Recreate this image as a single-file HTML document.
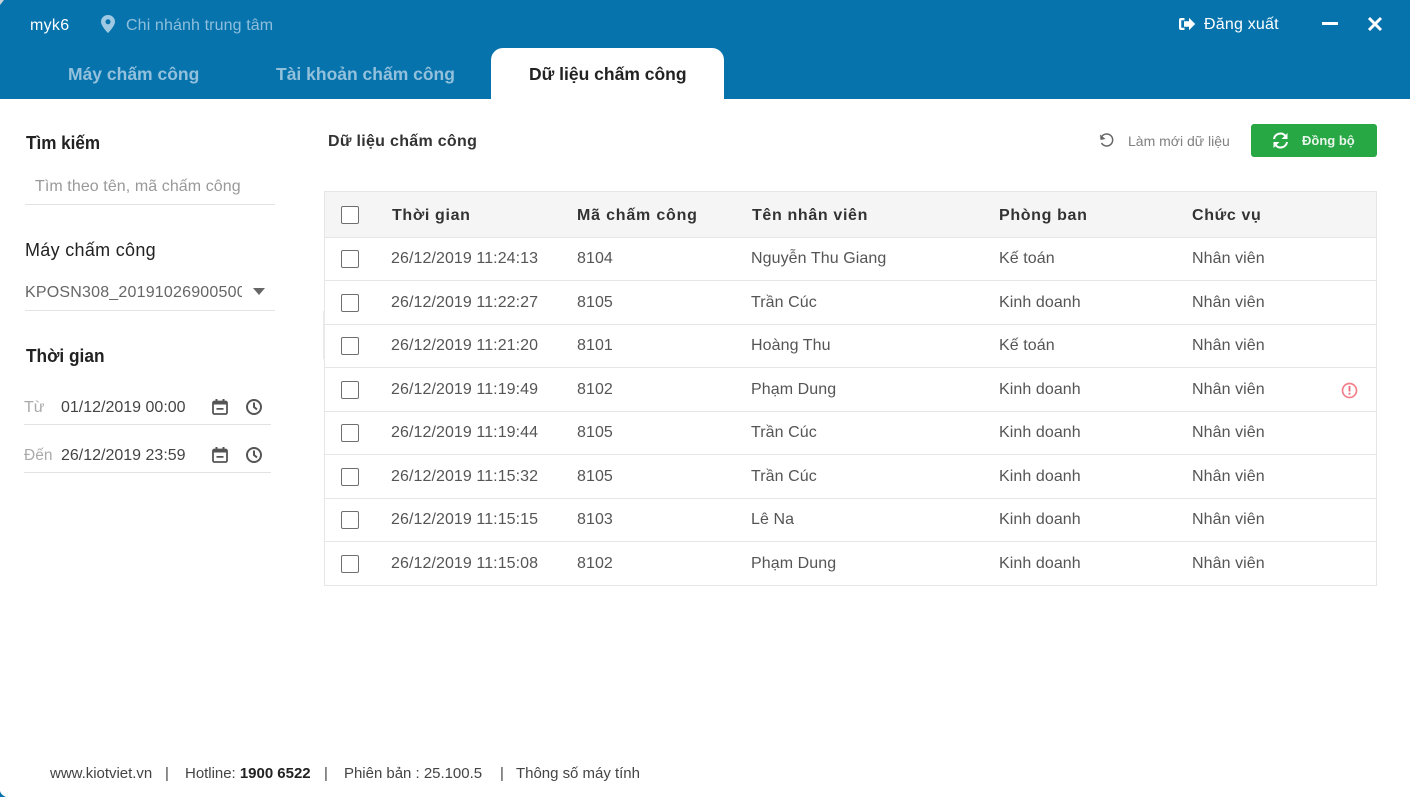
<!DOCTYPE html>
<html lang="vi">
<head>
<meta charset="utf-8">
<title>Dữ liệu chấm công</title>
<style>
html,body{margin:0;padding:0;width:1410px;height:797px;overflow:hidden;background:#fff}
body{font-family:"Liberation Sans",Arial,sans-serif;color:#333;position:relative}
.t{position:absolute;white-space:nowrap;line-height:20px}
.hdr{position:absolute;left:0;top:0;width:1410px;height:99px;background:#0673ad}
.tab{position:absolute;left:491px;top:48px;width:233px;height:51px;background:#fff;border-radius:12px 12px 0 0}
.line{position:absolute;height:1px;background:#e3e3e3}
.tbl{position:absolute;left:324px;top:191px;width:1051px;height:393px;border:1px solid #e6e6e6}
.th{position:absolute;left:0;top:0;width:1051px;height:45px;background:#f5f5f5;border-bottom:1px solid #e6e6e6}
.row{position:absolute;left:0;width:1051px;height:1px;background:#e6e6e6}
.cb{position:absolute;left:341px;width:16px;height:16px;border:1px solid #6f6f6f;border-radius:2px;background:#fff}
.h{font-size:16px;font-weight:bold;color:#333;letter-spacing:.65px;top:206px}
.c{font-size:16px;color:#555;letter-spacing:.08px}
.c1{left:391px}.c2{left:577px}.c3{left:751px}.c4{left:999px}.c5{left:1192px}
.f{top:764px;font-size:15px;color:#444;letter-spacing:-.02px}
.m{font-size:17.5px;font-weight:bold;top:64px}
svg{position:absolute;display:block}
</style>
</head>
<body>
<div class="hdr"></div>
<div class="tab"></div>
<svg style="left:0;top:0" width="4" height="5" viewBox="0 0 4 5"><path fill="#c9d3d8" d="M0 0h4L0 5z"/></svg>
<svg style="left:0;top:791px" width="6" height="6" viewBox="0 0 6 6"><path fill="#0673ad" d="M0 0q1 4 6 6H0z"/></svg>

<div class="t" style="left:30px;top:16px;font-size:16px;color:#fff;letter-spacing:.3px">myk6</div>
<svg style="left:100px;top:14px" width="16" height="20" viewBox="0 0 16 20"><path fill-rule="evenodd" fill="#9fc9e2" d="M8 1C4 1 1 4 1 7.700 1 12 8 19 8 19s7-7 7-11.300C15 4 12 1 8 1zm0 4.300a2.500 2.500 0 1 1 0 5 2.500 2.500 0 0 1 0-5z"/></svg>
<div class="t" style="left:126px;top:16px;font-size:16px;color:#8fbfdc;letter-spacing:.12px">Chi nhánh trung tâm</div>

<svg style="left:1178px;top:17px" width="18" height="14" viewBox="0 0 18 14"><path fill="#fff" d="M1 3a2 2 0 0 1 2-2h3.500v2.200H3.300v7.600h3.200V13H3a2 2 0 0 1-2-2zM11 .800 17.200 7 11 13.200V9.800H6V4.200h5z"/></svg>
<div class="t" style="left:1204px;top:15px;font-size:16px;color:#fff;letter-spacing:.2px">Đăng xuất</div>
<div style="position:absolute;left:1322px;top:22px;width:16px;height:3px;background:#fff"></div>
<svg style="left:1367px;top:16px" width="16" height="16" viewBox="0 0 16 16"><path stroke="#fff" stroke-width="3" d="M2 2l12 12M14 2L2 14"/></svg>

<div class="t m" style="left:68px;color:#93c1dc">Máy chấm công</div>
<div class="t m" style="left:276px;color:#93c1dc">Tài khoản chấm công</div>
<div class="t m" style="left:529px;color:#222">Dữ liệu chấm công</div>

<div class="t" style="left:26px;top:133px;font-size:18px;font-weight:bold;color:#222;transform-origin:left;transform:scaleX(.95)">Tìm kiếm</div>
<div class="t" style="left:35px;top:177px;font-size:16px;color:#999;letter-spacing:.08px">Tìm theo tên, mã chấm công</div>
<div class="line" style="left:25px;top:204px;width:250px"></div>

<div class="t" style="left:25px;top:240px;font-size:18px;color:#222;letter-spacing:.3px">Máy chấm công</div>
<div class="t" style="left:25px;top:283px;width:217px;overflow:hidden;font-size:16px;color:#666;letter-spacing:.2px">KPOSN308_201910269005000</div>
<svg style="left:252px;top:288px" width="14" height="8" viewBox="0 0 14 8"><path fill="#666" d="M1 0h12L7 7z"/></svg>
<div class="line" style="left:25px;top:310px;width:250px"></div>

<div class="t" style="left:26px;top:346px;font-size:18px;font-weight:bold;color:#222;transform-origin:left;transform:scaleX(.96)">Thời gian</div>

<div class="t" style="left:24px;top:398px;font-size:16px;color:#aaa">Từ</div>
<div class="t" style="left:61px;top:398px;font-size:16px;color:#444">01/12/2019 00:00</div>
<svg style="left:211px;top:398px" width="18" height="18" viewBox="0 0 18 18"><rect x="2" y="3.500" width="14" height="12.500" rx="1.500" fill="none" stroke="#555" stroke-width="1.800"/><path fill="#555" d="M2 3.500h14v3H2zM4.500 1h2v3h-2zM11.500 1h2v3h-2zM5.500 10h7v1.800h-7z"/></svg>
<svg style="left:245px;top:398px" width="18" height="18" viewBox="0 0 18 18"><circle cx="9" cy="9" r="7" fill="none" stroke="#555" stroke-width="2"/><path fill="none" stroke="#555" stroke-width="2" d="M9 4.500V9l3 2.500"/></svg>
<div class="line" style="left:24px;top:424px;width:247px"></div>

<div class="t" style="left:24px;top:446px;font-size:15.500px;color:#aaa">Đến</div>
<div class="t" style="left:61px;top:446px;font-size:16px;color:#444">26/12/2019 23:59</div>
<svg style="left:211px;top:446px" width="18" height="18" viewBox="0 0 18 18"><rect x="2" y="3.500" width="14" height="12.500" rx="1.500" fill="none" stroke="#555" stroke-width="1.800"/><path fill="#555" d="M2 3.500h14v3H2zM4.500 1h2v3h-2zM11.500 1h2v3h-2zM5.500 10h7v1.800h-7z"/></svg>
<svg style="left:245px;top:446px" width="18" height="18" viewBox="0 0 18 18"><circle cx="9" cy="9" r="7" fill="none" stroke="#555" stroke-width="2"/><path fill="none" stroke="#555" stroke-width="2" d="M9 4.500V9l3 2.500"/></svg>
<div class="line" style="left:24px;top:472px;width:247px"></div>

<div class="t" style="left:328px;top:132px;font-size:16px;font-weight:bold;color:#333;letter-spacing:.3px">Dữ liệu chấm công</div>
<svg style="left:1098px;top:132px" width="18" height="18" viewBox="0 0 18 18"><path fill="none" stroke="#666" stroke-width="1.500" d="M4 4.200A6 6 0 1 1 3.500 11"/><path fill="#666" d="M2 2.500l.500 5.500 5-1z"/></svg>
<div class="t" style="left:1128px;top:131px;font-size:14px;color:#808080">Làm mới dữ liệu</div>
<div style="position:absolute;left:1251px;top:124px;width:126px;height:33px;background:#28a745;border-radius:3px"></div>
<svg style="left:1272px;top:132px" width="17" height="17" viewBox="0 0 17 17"><path fill="none" stroke="#fff" stroke-width="2" d="M2 7a6.500 6.500 0 0 1 11.500-3M15 10a6.500 6.500 0 0 1-11.500 3"/><path fill="#fff" d="M15.500 1v6h-6zM1.500 16v-6h6z"/></svg>
<div class="t" style="left:1302px;top:131px;font-size:13px;font-weight:bold;color:#e8f5eb">Đồng bộ</div>

<div class="tbl">
  <div class="th"></div>
  <div class="row" style="top:88px"></div>
  <div class="row" style="top:132px"></div>
  <div class="row" style="top:175px"></div>
  <div class="row" style="top:219px"></div>
  <div class="row" style="top:262px"></div>
  <div class="row" style="top:306px"></div>
  <div class="row" style="top:349px"></div>
</div>
<div style="position:absolute;left:323px;top:311px;width:2px;height:48px;background:#e9e9e9"></div>

<div class="cb" style="top:206px"></div>
<div class="t h" style="left:392px">Thời gian</div>
<div class="t h" style="left:577px;letter-spacing:.8px">Mã chấm công</div>
<div class="t h" style="left:752px">Tên nhân viên</div>
<div class="t h" style="left:999px">Phòng ban</div>
<div class="t h" style="left:1192px">Chức vụ</div>

<div class="cb" style="top:250px"></div>
<div class="t c c1" style="top:249px">26/12/2019 11:24:13</div><div class="t c c2" style="top:249px">8104</div><div class="t c c3" style="top:249px">Nguyễn Thu Giang</div><div class="t c c4" style="top:249px">Kế toán</div><div class="t c c5" style="top:249px">Nhân viên</div>

<div class="cb" style="top:294px"></div>
<div class="t c c1" style="top:293px">26/12/2019 11:22:27</div><div class="t c c2" style="top:293px">8105</div><div class="t c c3" style="top:293px">Trần Cúc</div><div class="t c c4" style="top:293px">Kinh doanh</div><div class="t c c5" style="top:293px">Nhân viên</div>

<div class="cb" style="top:337px"></div>
<div class="t c c1" style="top:336px">26/12/2019 11:21:20</div><div class="t c c2" style="top:336px">8101</div><div class="t c c3" style="top:336px">Hoàng Thu</div><div class="t c c4" style="top:336px">Kế toán</div><div class="t c c5" style="top:336px">Nhân viên</div>

<div class="cb" style="top:381px"></div>
<div class="t c c1" style="top:380px">26/12/2019 11:19:49</div><div class="t c c2" style="top:380px">8102</div><div class="t c c3" style="top:380px">Phạm Dung</div><div class="t c c4" style="top:380px">Kinh doanh</div><div class="t c c5" style="top:380px">Nhân viên</div>
<svg style="left:1341px;top:382px" width="17" height="17" viewBox="0 0 17 17"><circle cx="8.500" cy="8.500" r="7" fill="none" stroke="#f27f8a" stroke-width="1.700"/><path fill="#ee6b78" d="M7.600 4h1.800v5.500H7.600zM7.600 10.800h1.800v1.800H7.600z"/></svg>

<div class="cb" style="top:424px"></div>
<div class="t c c1" style="top:423px">26/12/2019 11:19:44</div><div class="t c c2" style="top:423px">8105</div><div class="t c c3" style="top:423px">Trần Cúc</div><div class="t c c4" style="top:423px">Kinh doanh</div><div class="t c c5" style="top:423px">Nhân viên</div>

<div class="cb" style="top:468px"></div>
<div class="t c c1" style="top:467px">26/12/2019 11:15:32</div><div class="t c c2" style="top:467px">8105</div><div class="t c c3" style="top:467px">Trần Cúc</div><div class="t c c4" style="top:467px">Kinh doanh</div><div class="t c c5" style="top:467px">Nhân viên</div>

<div class="cb" style="top:511px"></div>
<div class="t c c1" style="top:510px">26/12/2019 11:15:15</div><div class="t c c2" style="top:510px">8103</div><div class="t c c3" style="top:510px">Lê Na</div><div class="t c c4" style="top:510px">Kinh doanh</div><div class="t c c5" style="top:510px">Nhân viên</div>

<div class="cb" style="top:555px"></div>
<div class="t c c1" style="top:554px">26/12/2019 11:15:08</div><div class="t c c2" style="top:554px">8102</div><div class="t c c3" style="top:554px">Phạm Dung</div><div class="t c c4" style="top:554px">Kinh doanh</div><div class="t c c5" style="top:554px">Nhân viên</div>

<div class="t f" style="left:50px">www.kiotviet.vn</div>
<div class="t f" style="left:165px">|</div>
<div class="t f" style="left:185px">Hotline: <b style="color:#222">1900 6522</b></div>
<div class="t f" style="left:324px">|</div>
<div class="t f" style="left:344px">Phiên bản : 25.100.5</div>
<div class="t f" style="left:500px">|</div>
<div class="t f" style="left:516px">Thông số máy tính</div>
</body>
</html>
